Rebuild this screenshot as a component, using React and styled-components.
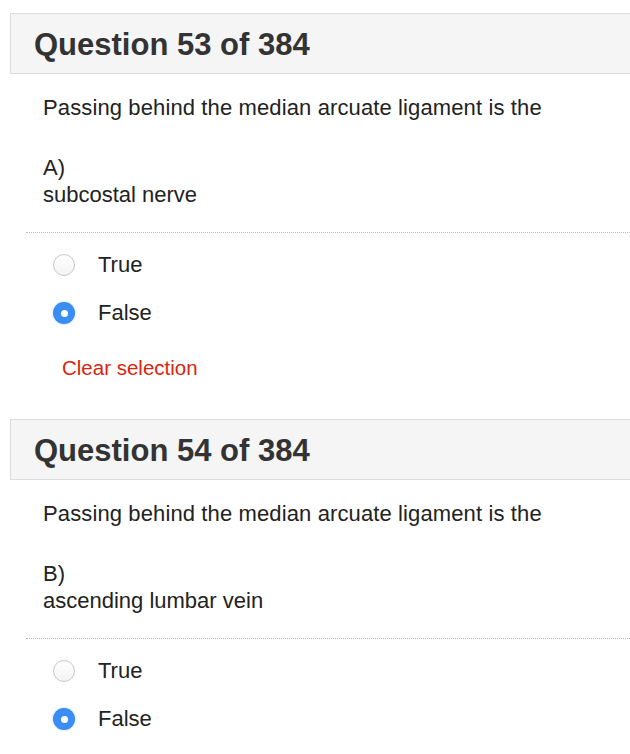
import styled, { createGlobalStyle } from 'styled-components';

const questions = [
    { num: 53, letter: 'A', answer: 'subcostal nerve', showClear: true },
    { num: 54, letter: 'B', answer: 'ascending lumbar vein', showClear: false },
];

const App = () => {
    return (
        <Page>
            <GlobalStyle />
            {questions.map((q) => (
                <QuestionBlock key={q.num}>
                    <Header>
                        <Title>Question {q.num} of 384</Title>
                    </Header>
                    <Stem>Passing behind the median arcuate ligament is the</Stem>
                    <Answer>
                        {q.letter})
                        <br />
                        {q.answer}
                    </Answer>
                    <Options>
                        <Option>
                            <Radio />
                            <OptionLabel>True</OptionLabel>
                        </Option>
                        <Option>
                            <Radio $checked />
                            <OptionLabel>False</OptionLabel>
                        </Option>
                    </Options>
                    {q.showClear && <ClearLink>Clear selection</ClearLink>}
                </QuestionBlock>
            ))}
        </Page>
    );
};

export default App;

const GlobalStyle = createGlobalStyle`
    html, body {
        margin: 0;
        padding: 0;
        background: #fff;
        overflow: hidden;
    }
    body {
        font-family: "Liberation Sans", Arial, sans-serif;
        color: #222;
    }
`;

const Page = styled.div`
    width: 650px;
    padding: 13px 0 0 10px;
`;

const QuestionBlock = styled.section`
    margin-bottom: 38px;
`;

const Header = styled.div`
    box-sizing: border-box;
    height: 61px;
    display: flex;
    align-items: center;
    padding: 3px 0 0 23px;
    background: #f5f5f5;
    border: 1px solid #dcdcdc;
`;

const Title = styled.h2`
    margin: 0;
    font-size: 31px;
    font-weight: 700;
    color: #333;
`;

const Stem = styled.div`
    margin: 20px 0 0 33px;
    font-size: 22px;
    letter-spacing: 0.12px;
    line-height: 27px;
    color: #222;
`;

const Answer = styled.div`
    margin: 33px 0 0 33px;
    font-size: 22px;
    line-height: 27px;
    color: #222;
`;

const Options = styled.div`
    margin: 24px 0 0 16px;
    padding-top: 8px;
    border-top: 1px dotted #bbb;
`;

const Option = styled.label`
    height: 48px;
    display: flex;
    align-items: center;
    padding-left: 27px;
`;

const Radio = styled.span`
    box-sizing: border-box;
    width: 22px;
    height: 22px;
    border-radius: 50%;
    flex-shrink: 0;
    position: relative;
    border: ${(p) => (p.$checked ? 'none' : '1px solid #c8c8c8')};
    background: ${(p) => (p.$checked ? '#3a8ef3' : 'linear-gradient(#fff, #f3f3f3)')};
    box-shadow: ${(p) => (p.$checked ? '0 0 2px rgba(58, 142, 243, 0.5)' : 'none')};

    &::after {
        content: '';
        display: ${(p) => (p.$checked ? 'block' : 'none')};
        position: absolute;
        left: 50%;
        top: 50%;
        width: 7px;
        height: 7px;
        margin: -3.5px 0 0 -3.5px;
        border-radius: 50%;
        background: #fff;
    }
`;

const OptionLabel = styled.span`
    margin-left: 23px;
    font-size: 22px;
    color: #222;
`;

const ClearLink = styled.div`
    margin: 18px 0 0 52px;
    font-size: 20.5px;
    line-height: 26px;
    color: #d8240e;
    cursor: pointer;
`;
